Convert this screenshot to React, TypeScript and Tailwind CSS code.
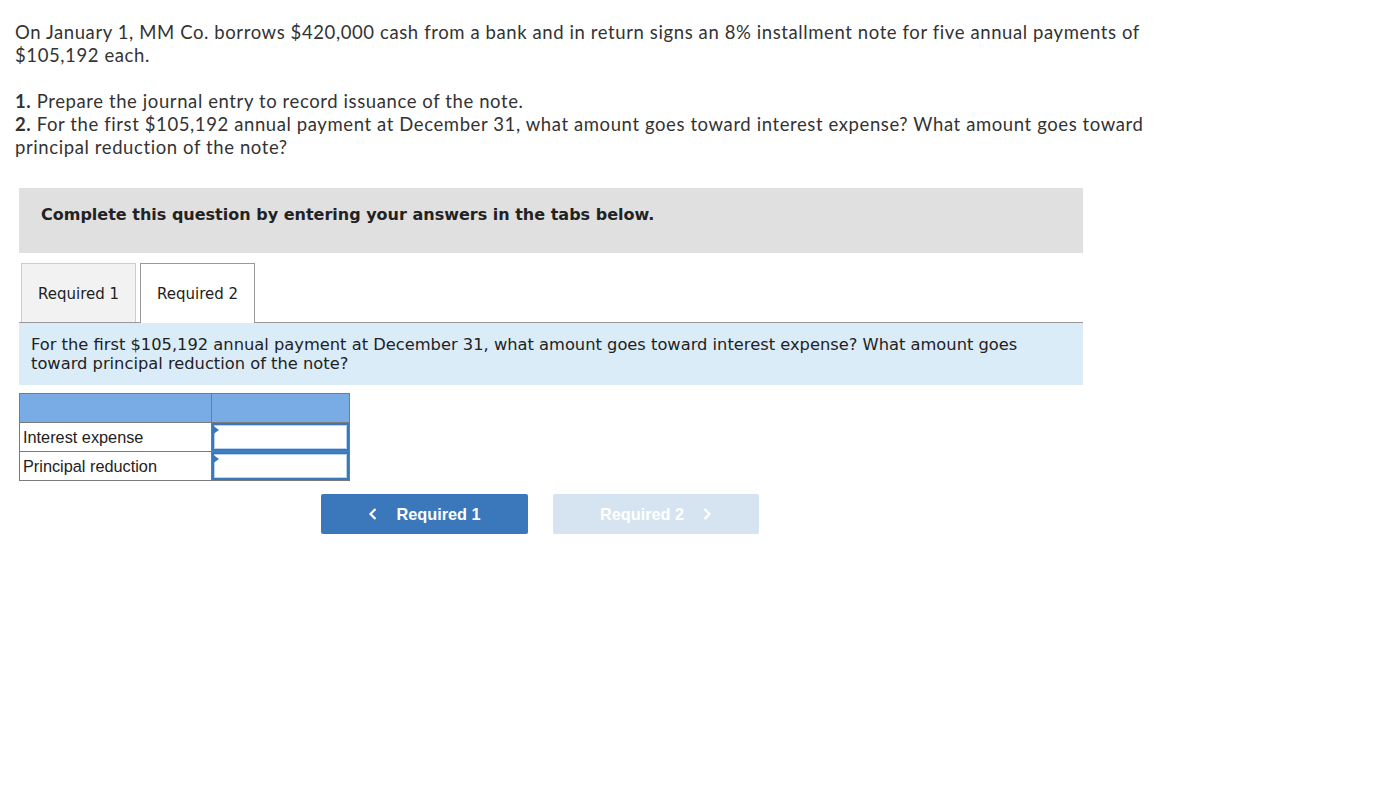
import React from "react"

const ROWS = ["Interest expense", "Principal reduction"]

function AnswerCell() {
  return (
    <td className="relative h-[29px] w-[138px] border border-[#7a7a7a] p-0">
      <div className="absolute inset-0 border-2 border-[#3b77bb]">
        <div className="h-full w-full border border-[#b9d3ef] bg-white" />
      </div>
      <span className="absolute left-0 top-[2px] h-0 w-0 border-y-[5px] border-l-[7px] border-y-transparent border-l-[#3b77bb]" />
    </td>
  )
}

export default function App() {
  return (
    <div className="min-h-screen bg-white px-[15px] pt-[21px] text-[#333]">
      <div className="font-['Lato',sans-serif] text-[18.5px] leading-[23px] tracking-[0.6px]">
        <p className="whitespace-nowrap">
          On January 1, MM Co. borrows $420,000 cash from a bank and in return signs an 8% installment note for five annual payments of
          <br />
          $105,192 each.
        </p>
        <p className="mt-[23px] whitespace-nowrap">
          <b>1.</b> Prepare the journal entry to record issuance of the note.
          <br />
          <b>2.</b> For the first $105,192 annual payment at December 31, what amount goes toward interest expense? What amount goes toward
          <br />
          principal reduction of the note?
        </p>
      </div>

      <div className="ml-[4px] mt-[29px] w-[1064px]">
        <div className="h-[65px] bg-[#e0e0e0] px-[22px] pt-[16px] font-['DejaVu_Sans',Verdana,sans-serif] text-[16px] font-bold leading-[22px] text-[#222]">
          Complete this question by entering your answers in the tabs below.
        </div>

        <div className="mt-[10px] flex gap-[4px] border-b border-[#999] pl-[2px] font-['DejaVu_Sans',Verdana,sans-serif] text-[15px] text-[#222]">
          <div className="flex h-[59px] w-[115px] items-center justify-center border border-b-0 border-[#ccc] bg-[#f2f2f2] pt-[2px]">
            Required 1
          </div>
          <div className="-mb-px flex h-[60px] w-[115px] items-center justify-center border border-b-0 border-[#999] bg-white pt-[1px]">
            Required 2
          </div>
        </div>

        <div className="bg-[#dbecf9] px-[12px] pb-[12px] pt-[12px] font-['DejaVu_Sans',Verdana,sans-serif] text-[16.3px] leading-[19px] text-[#222]">
          For the first $105,192 annual payment at December 31, what amount goes toward interest expense? What amount goes
          <br />
          toward principal reduction of the note?
        </div>

        <table className="mt-[8px] border-collapse font-['Liberation_Sans',Arial,sans-serif] text-[16.3px] text-[#222]">
          <thead>
            <tr className="h-[29px] bg-[#79ace5]">
              <th className="w-[192px] border border-[#7a7a7a]" />
              <th className="w-[138px] border border-[#7a7a7a]" />
            </tr>
          </thead>
          <tbody>
            {ROWS.map((r) => (
              <tr key={r} className="h-[29px]">
                <td className="border border-[#7a7a7a] px-[3px] py-0">{r}</td>
                <AnswerCell />
              </tr>
            ))}
          </tbody>
        </table>

        <div className="ml-[302px] mt-[13px] flex gap-[25px] font-['Liberation_Sans',Arial,sans-serif] text-[16.3px] font-bold text-white">
          <button className="flex h-[40px] w-[207px] items-center justify-center gap-[18px] rounded-[2px] bg-[#3b77bb]">
            <svg width="10" height="14" viewBox="0 0 10 14" fill="none" stroke="white" strokeWidth="2.2">
              <path d="M7.5 2 L2.5 7 L7.5 12" />
            </svg>
            Required 1
          </button>
          <button className="flex h-[40px] w-[206px] items-center justify-center gap-[18px] rounded-[2px] bg-[#d6e3f1]">
            Required 2
            <svg width="10" height="14" viewBox="0 0 10 14" fill="none" stroke="white" strokeWidth="2.2">
              <path d="M2.5 2 L7.5 7 L2.5 12" />
            </svg>
          </button>
        </div>
      </div>
    </div>
  )
}
